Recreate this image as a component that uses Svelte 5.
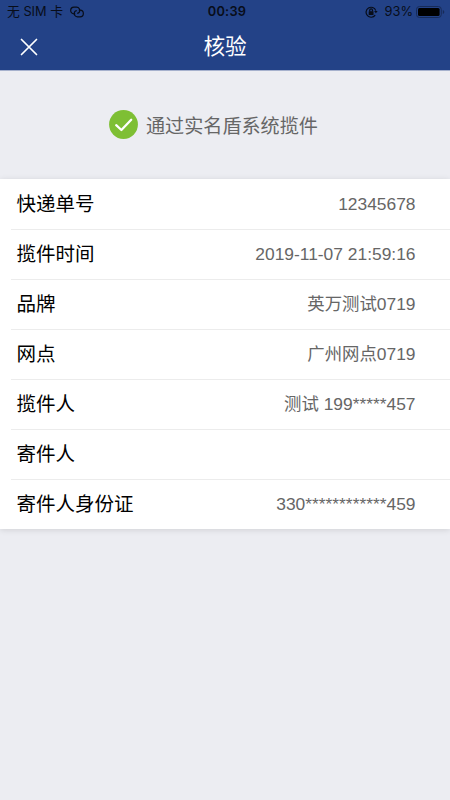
<script lang="ts">
	interface Row { label: string; value: string; }

	const rows: Row[] = [
		{ label: '快递单号', value: '12345678' },
		{ label: '揽件时间', value: '2019-11-07 21:59:16' },
		{ label: '品牌', value: '英万测试0719' },
		{ label: '网点', value: '广州网点0719' },
		{ label: '揽件人', value: '测试 199*****457' },
		{ label: '寄件人', value: '' },
		{ label: '寄件人身份证', value: '330************459' },
	];
</script>

<div class="page">
	<header>
		<div class="status">
			<div class="carrier">
				<span>无 SIM 卡</span>
				<svg width="14" height="12" viewBox="0 0 14 12">
					<path d="M5.2 7.9H4A3.3 3.3 0 0 1 4 1.2h2.6a3.3 3.3 0 0 1 2.9 4.7Q8.8 7.1 7.2 7.3" />
					<path d="M8.8 4.1H10a3.3 3.3 0 0 1 0 6.7H7.4a3.3 3.3 0 0 1-2.9-4.7Q5.2 4.9 6.8 4.7" />
				</svg>
			</div>
			<span class="clock">00:39</span>
			<div class="power">
				<svg class="lock" width="13" height="12" viewBox="0 0 13 12">
					<path d="M10.2 9.1A5 5 0 1 1 10.8 4.6" />
					<path class="fill" d="M9.1 5H12.7L10.9 7.3Z" />
					<rect class="fill" x="3.7" y="5.3" width="4.8" height="3.7" rx=".5" />
					<path d="M4.7 5.4V4.3a1.4 1.4 0 0 1 2.8 0V5.4" />
				</svg>
				<span>93%</span>
				<svg class="battery" width="29" height="12" viewBox="0 0 29 12">
					<rect class="shell" x=".5" y=".5" width="24.8" height="11" rx="3" />
					<rect class="fill" x="2" y="2" width="21.6" height="8" rx="1.5" />
					<path class="cap" d="M26.8 4v4q1.5-.6 1.5-2t-1.5-2Z" />
				</svg>
			</div>
		</div>
		<div class="nav">
			<button aria-label="关闭">
				<svg width="18" height="18" viewBox="0 0 18 18"><path d="M1.5 1.5l15 15M16.5 1.5l-15 15" /></svg>
			</button>
			<h1>核验</h1>
		</div>
	</header>

	<div class="result">
		<svg width="29" height="29" viewBox="0 0 29 29">
			<circle cx="14.5" cy="14.5" r="14.4" />
			<path d="M7.2 15.2l5.2 4.8L22.2 9.8" />
		</svg>
		<span>通过实名盾系统揽件</span>
	</div>

	<div class="list">
		{#each rows as row}
			<div class="row">
				<span class="label">{row.label}</span>
				<span class="value">{row.value}</span>
			</div>
		{/each}
	</div>
</div>

<style>
	:global(body) { background:#ecedf2; }
	.page {
		min-height:800px; background:#ecedf2;
		font-family:"Liberation Sans", "Noto Sans CJK SC", sans-serif;
	}

	header { height:70px; background:#234287; border-bottom:1px solid #a6b1cd; box-sizing:content-box; }
	.status {
		display:grid; grid-template-columns:1fr auto 1fr; align-items:center;
		height:23px; padding:0 5px 0 7px; box-sizing:border-box;
		font:12.8px/23px Inter, "Noto Sans CJK SC", sans-serif; color:#080d19;
	}
	.status svg { fill:none; stroke:#080d19; stroke-width:1.2; }
	.status .fill { fill:#080d19; stroke:none; }
	.carrier { display:flex; align-items:center; gap:7px; white-space:nowrap; }
	.clock { padding-left:2px; font-weight:600; letter-spacing:.25px; }
	.power { display:flex; align-items:center; justify-content:flex-end; }
	.lock { margin-right:7px; }
	.battery { margin-left:3px; }
	.status .battery .shell { stroke:#172b58; stroke-width:1; }
	.status .battery .fill { fill:#000; }
	.status .battery .cap { fill:#172b58; stroke:none; }

	.nav { display:grid; grid-template-columns:1fr auto 1fr; align-items:center; height:47px; }
	.nav button { display:flex; justify-self:start; margin-left:20px; padding:0; border:0; background:none; }
	.nav svg { fill:none; stroke:#fff; stroke-width:1.7; stroke-linecap:round; }
	h1 { margin:0; font-size:21.6px; line-height:32px; font-weight:400; color:#fff; }

	.result {
		display:flex; align-items:center; gap:8px;
		height:108px; padding:0 0 1px 109px; box-sizing:border-box;
		font-size:19.1px; color:#666;
	}
	.result circle { fill:#7ebf34; }
	.result path { fill:none; stroke:#fff; stroke-width:2.3; stroke-linecap:round; stroke-linejoin:round; }

	.list { background:#fff; box-shadow:0 1px 6px rgba(0,0,0,.12); }
	.row {
		display:flex; align-items:center; justify-content:space-between;
		height:50px; margin-left:11px; padding:0 34.5px 2px 5.5px; box-sizing:border-box;
		border-top:1px solid #ececec; line-height:24px;
	}
	.row:first-child { border-top-color:transparent; }
	.label { font-size:19.5px; color:#000; }
	.value { font-size:17.4px; color:#666; }
</style>
